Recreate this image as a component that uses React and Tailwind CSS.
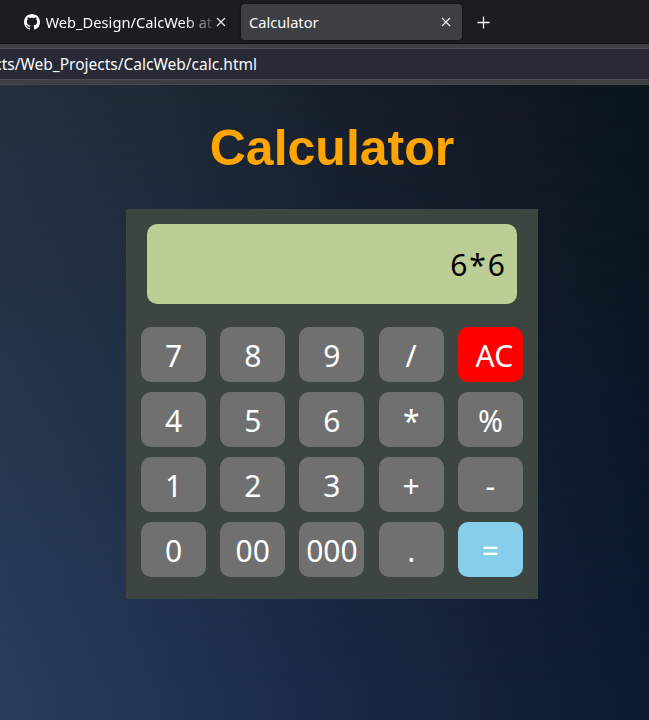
import React from "react";

const KEYS = [
  ["7", "8", "9", "/", "AC"],
  ["4", "5", "6", "*", "%"],
  ["1", "2", "3", "+", "-"],
  ["0", "00", "000", ".", "="],
];

function GitHubMark() {
  return (
    <svg viewBox="0 0 16 16" className="h-4 w-4 shrink-0 fill-white">
      <path d="M8 0C3.58 0 0 3.58 0 8c0 3.54 2.29 6.53 5.47 7.59.4.07.55-.17.55-.38 0-.19-.01-.82-.01-1.49-2.01.37-2.53-.49-2.69-.94-.09-.23-.48-.94-.82-1.13-.28-.15-.68-.52-.01-.53.63-.01 1.08.58 1.23.82.72 1.21 1.87.87 2.33.66.07-.52.28-.87.51-1.07-1.78-.2-3.64-.89-3.64-3.95 0-.87.31-1.59.82-2.15-.08-.2-.36-1.02.08-2.12 0 0 .67-.21 2.2.82.64-.18 1.32-.27 2-.27s1.36.09 2 .27c1.53-1.04 2.2-.82 2.2-.82.44 1.1.16 1.92.08 2.12.51.56.82 1.27.82 2.15 0 3.07-1.87 3.75-3.65 3.95.29.25.54.73.54 1.48 0 1.07-.01 1.93-.01 2.2 0 .21.15.46.55.38A8.01 8.01 0 0 0 16 8c0-4.42-3.58-8-8-8z" />
    </svg>
  );
}

function CloseIcon() {
  return (
    <svg viewBox="0 0 10 10" className="h-2.5 w-2.5 shrink-0 stroke-[#f4f4f6]" fill="none">
      <path d="M1 1l8 8M9 1L1 9" strokeWidth="1.1" />
    </svg>
  );
}

function Tabs() {
  return (
    <div className="flex h-11 items-start border-b border-[#111216] bg-[#1b1d23] pt-1 text-[14.67px] text-[#fbfbfe]">
      <div className="flex h-9 w-[241px] items-center pl-6">
        <GitHubMark />
        <span className="ml-[5.5px] w-[166.5px] whitespace-nowrap [mask-image:linear-gradient(to_right,black_138px,transparent_174px)]">
          Web_Design/CalcWeb at
        </span>
        <span className="ml-1 flex">
          <CloseIcon />
        </span>
      </div>
      <div className="flex h-9 w-[221px] items-center justify-between rounded-[4px] bg-[#3e3f43] pr-[11px] pl-2 shadow-[0_0_3px_rgba(0,0,0,0.6)]">
        <span>Calculator</span>
        <CloseIcon />
      </div>
      <div className="flex h-9 items-center pl-[15px]">
        <svg viewBox="0 0 13 13" className="h-[13px] w-[13px] stroke-[#fbfbfe]" fill="none">
          <path d="M6.5 0.5v12M0.5 6.5h12" strokeWidth="1.3" />
        </svg>
      </div>
    </div>
  );
}

function AddressBar() {
  return (
    <div className="h-[41px] border-b border-[#47484e] bg-[#3e3f43] pt-1">
      <div className="flex h-8 w-full items-center border-y border-[#4b4c52] bg-[#282a36]">
        <div className="flex w-[257px] shrink-0 justify-end pt-[2px] text-[15.5px] whitespace-nowrap text-[#fbfbfe]">
          <span>cts/Web_Projects/CalcWeb/calc.html</span>
        </div>
      </div>
    </div>
  );
}

function Key({ label }) {
  const tone =
    label === "AC"
      ? "bg-[#ff0000] pl-2"
      : label === "="
        ? "bg-[#87ceeb]"
        : "bg-[#707070]";
  return (
    <button
      className={`flex h-[55px] w-[65px] items-center justify-center rounded-[10px] pt-[3px] text-[30px] leading-none text-white ${tone}`}
    >
      {label}
    </button>
  );
}

function Calculator() {
  return (
    <div className="h-[390px] w-[412px] bg-[#3d4541] px-[15px] pt-[15px]">
      <div className="mx-1.5 flex h-20 items-center justify-end rounded-[10px] bg-[#bccd95] px-2.5 pt-px text-[30px] leading-none tracking-[2px] text-black">
        6*6
      </div>
      <div className="mt-[23px] mr-[0.1px] flex flex-col gap-2.5">
        {KEYS.map((row) => (
          <div key={row[0]} className="flex justify-between">
            {row.map((label) => (
              <Key key={label} label={label} />
            ))}
          </div>
        ))}
      </div>
    </div>
  );
}

export default function App() {
  return (
    <div className="flex h-[720px] w-[649px] flex-col overflow-hidden font-['Noto_Sans',sans-serif]">
      <Tabs />
      <AddressBar />
      <main className="grid h-[635px] bg-[linear-gradient(to_right,#252f3d_0%,#1f2b37_23%,#181f2c_52%,#121822_80%,#0a161d_100%)]">
        <div className="col-start-1 row-start-1 bg-[linear-gradient(to_right,#283e5f_0%,#213454_25%,#192a47_50%,#15213b_75%,#0a1931_100%)] [mask-image:linear-gradient(to_bottom,transparent_0%,rgba(0,0,0,0.28)_32%,black_95%)]" />
        <div className="z-10 col-start-1 row-start-1 flex flex-col items-center pl-[15px]">
          <h1 className="mt-[35px] mb-8 font-['Liberation_Sans',sans-serif] text-[50px] leading-[57px] font-bold text-[#ffa500]">
            Calculator
          </h1>
          <Calculator />
        </div>
      </main>
    </div>
  );
}
